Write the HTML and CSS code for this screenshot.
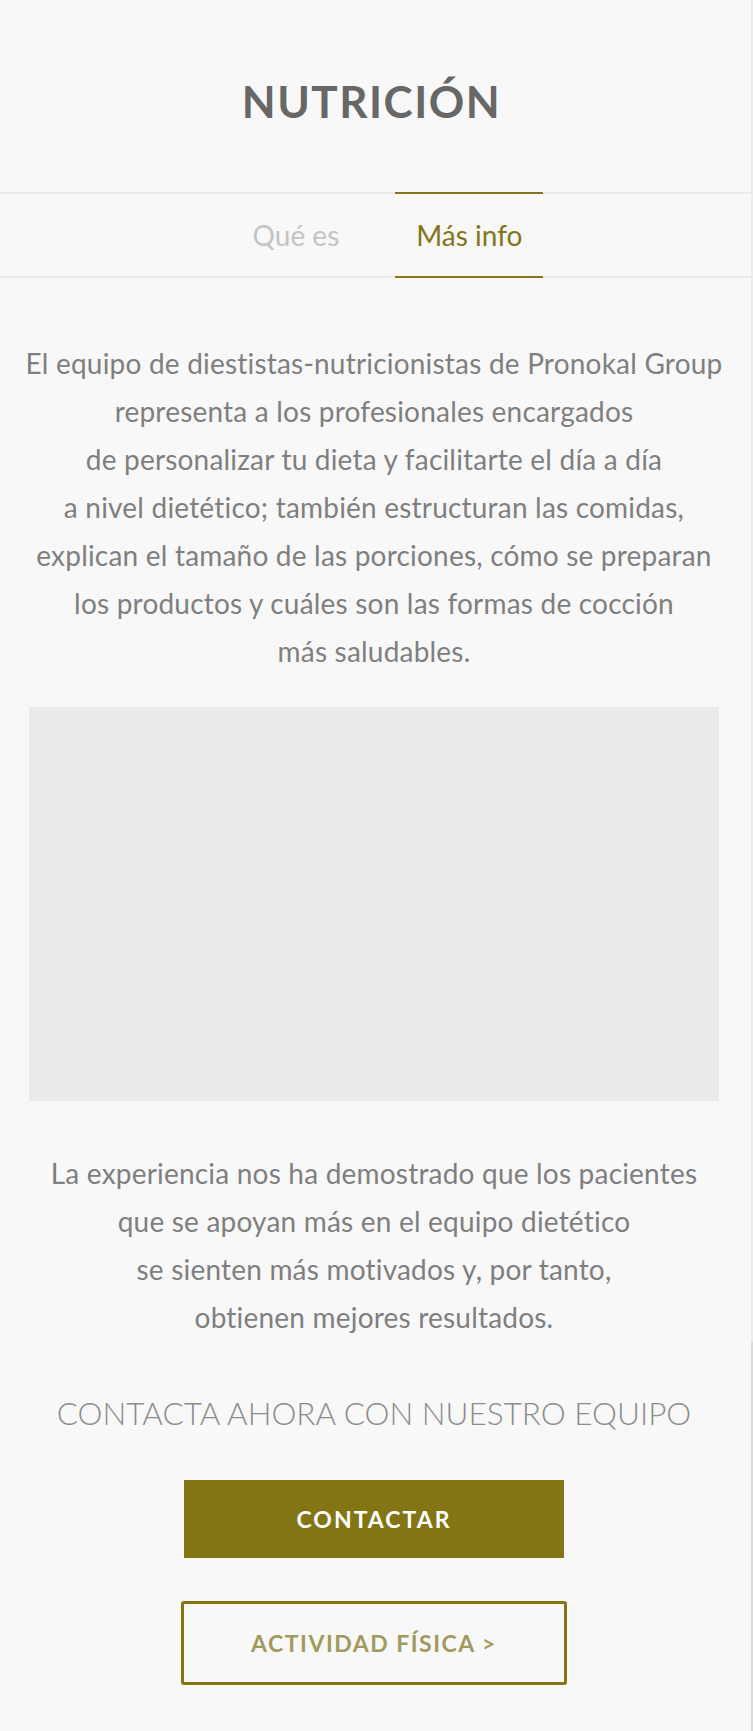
FILE: index.html
```html
<!DOCTYPE html>
<html lang="es">
<head>
<meta charset="utf-8">
<title>Nutrición</title>
<link rel="stylesheet" href="styles.css">
</head>
<body>
<div class="page">
  <header class="header">
    <h1 class="title">NUTRICIÓN</h1>
  </header>
  <nav class="tabs">
    <a class="tab">Qué es</a>
    <a class="tab tab-active">Más info</a>
  </nav>
  <main class="content">
    <p class="text text-first">El equipo de diestistas-nutricionistas de Pronokal Group<br>representa a los profesionales encargados<br>de personalizar tu dieta y facilitarte el día a día<br>a nivel dietético; también estructuran las comidas,<br>explican el tamaño de las porciones, cómo se preparan<br>los productos y cuáles son las formas de cocción<br>más saludables.</p>
    <div class="media"></div>
    <p class="text text-second">La experiencia nos ha demostrado que los pacientes<br>que se apoyan más en el equipo dietético<br>se sienten más motivados y, por tanto,<br>obtienen mejores resultados.</p>
    <h2 class="cta-title">CONTACTA AHORA CON NUESTRO EQUIPO</h2>
    <a class="btn btn-solid">CONTACTAR</a>
    <a class="btn btn-outline">ACTIVIDAD FÍSICA &gt;</a>
  </main>
  <div class="scroll-thumb"></div>
</div>
</body>
</html>
```
FILE: styles.css
```css
html, body {
  margin: 0;
  padding: 0;
  background: #f8f8f8;
}
body {
  font-family: "Lato", "Liberation Sans", sans-serif;
  color: #777;
}
.page {
  position: relative;
  width: 751px;
  min-height: 1731px;
  border-right: 2px solid #ebebeb;
}
.header {
  padding: 75px 8px 65px 0;
  text-align: center;
}
.title {
  margin: 0;
  font-size: 44px;
  line-height: 52px;
  font-weight: 700;
  letter-spacing: 1.5px;
  color: #676767;
}
.tabs {
  display: flex;
  justify-content: center;
  gap: 35px;
  padding-left: 24px;
  border-top: 2px solid #ebebeb;
  border-bottom: 2px solid #ebebeb;
}
.tab {
  display: block;
  margin: -2px 0;
  padding: 0 21px;
  border-top: 2px solid transparent;
  border-bottom: 2px solid transparent;
  font-size: 28px;
  line-height: 82px;
  color: #c4c4c4;
}
.tab-active {
  color: #83761a;
  border-top-color: #83761a;
  border-bottom-color: #83761a;
}
.content {
  display: flex;
  flex-direction: column;
  align-items: center;
  padding: 0 3px 44px 0;
}
.text {
  margin: 0;
  font-size: 28px;
  line-height: 48px;
  font-weight: 400;
  letter-spacing: 0.2px;
  text-align: center;
  color: #7f7f7f;
  white-space: nowrap;
}
.text-first {
  margin-top: 61px;
}
.media {
  width: 690px;
  height: 394px;
  margin-top: 32px;
  background: #eaeaea;
}
.text-second {
  margin-top: 48px;
}
.cta-title {
  margin: 54px 0 0;
  font-size: 31.5px;
  line-height: 36px;
  font-weight: 300;
  color: #8c8c8c;
  white-space: nowrap;
}
.btn {
  display: flex;
  align-items: center;
  justify-content: center;
  box-sizing: border-box;
  font-size: 23px;
  font-weight: 700;
  letter-spacing: 1.5px;
  text-decoration: none;
}
.btn-solid {
  width: 380px;
  height: 78px;
  margin-top: 49px;
  background: #837513;
  color: #fff;
  letter-spacing: 2px;
}
.btn-outline {
  width: 386px;
  height: 84px;
  margin-top: 43px;
  border: 3px solid #837513;
  border-radius: 3px;
  color: #a09a5e;
}
.scroll-thumb {
  position: absolute;
  top: 1342px;
  right: -2px;
  width: 2px;
  height: 389px;
  background: #d9d9d9;
}
```
